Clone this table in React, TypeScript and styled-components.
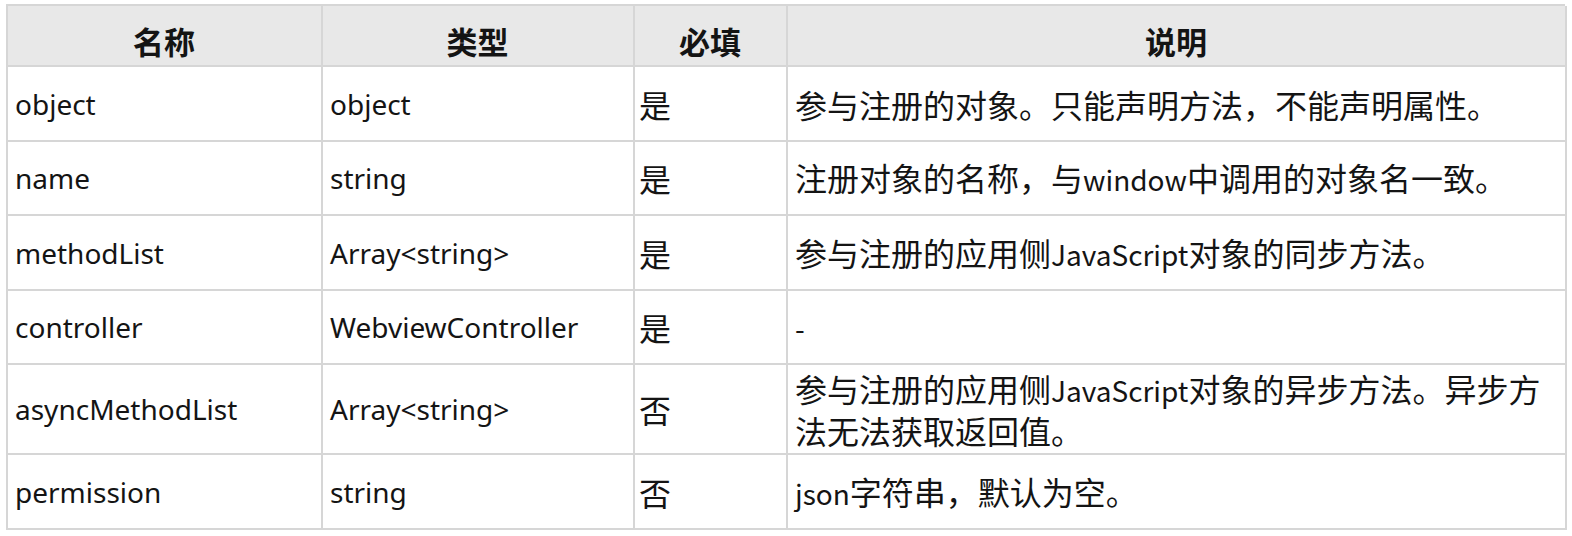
import { Fragment, type ReactNode } from 'react';
import styled, { createGlobalStyle } from 'styled-components';

const GlobalStyle = createGlobalStyle`
  body {
    margin: 0;
    background: #ffffff;
  }
`;

const Page = styled.div`
  padding: 4px 7px 0 6px;
`;

const Table = styled.div<{ $rows: number[] }>`
  display: grid;
  grid-template-columns: 315px 312px 153px 779px;
  grid-template-rows: ${({ $rows }) => $rows.map((h) => `${h}px`).join(' ')};
  border-top: 2px solid #d6d6d6;
  border-left: 2px solid #d6d6d6;
  color: #141414;
  box-sizing: border-box;
`;

const Cell = styled.div`
  display: flex;
  align-items: center;
  box-sizing: border-box;
  border-right: 2px solid #d6d6d6;
  border-bottom: 2px solid #d6d6d6;
  padding: 0 8px 0 7px;
`;

const HeadCell = styled(Cell)`
  justify-content: center;
  padding-top: 10px;
  background: #e8e8e8;
  font-family: 'Noto Sans CJK SC', sans-serif;
  font-size: 31px;
  font-weight: 700;
`;

const TextCell = styled(Cell)`
  font-family: 'Noto Sans', 'Noto Sans CJK SC', sans-serif;
  font-size: 28px;
`;

const RequiredCell = styled(Cell)`
  padding-left: 4px;
  font-family: 'Noto Sans CJK SC', sans-serif;
  font-size: 32px;
`;

const DescCell = styled(Cell)`
  padding-right: 22px;
  font-family: 'Noto Sans CJK SC', sans-serif;
  font-size: 32px;
  line-height: 40px;
`;

const Latin = styled.span`
  display: inline-block;
  font-family: 'Noto Sans CJK SC', sans-serif;
  font-size: 28px;
`;

interface ParamRow {
  name: string;
  type: string;
  required: string;
  desc: ReactNode;
  height: number;
}

const rows: ParamRow[] = [
  {
    name: 'object',
    type: 'object',
    required: '是',
    desc: '参与注册的对象。只能声明方法，不能声明属性。',
    height: 75,
  },
  {
    name: 'name',
    type: 'string',
    required: '是',
    desc: (
      <>
        注册对象的名称，与<Latin>window</Latin>中调用的对象名一致。
      </>
    ),
    height: 74,
  },
  {
    name: 'methodList',
    type: 'Array<string>',
    required: '是',
    desc: (
      <>
        参与注册的应用侧<Latin>JavaScript</Latin>对象的同步方法。
      </>
    ),
    height: 75,
  },
  {
    name: 'controller',
    type: 'WebviewController',
    required: '是',
    desc: <Latin>-</Latin>,
    height: 74,
  },
  {
    name: 'asyncMethodList',
    type: 'Array<string>',
    required: '否',
    desc: (
      <>
        参与注册的应用侧<Latin>JavaScript</Latin>对象的异步方法。异步方法无法获取返回值。
      </>
    ),
    height: 90,
  },
  {
    name: 'permission',
    type: 'string',
    required: '否',
    desc: (
      <>
        <Latin>json</Latin>字符串，默认为空。
      </>
    ),
    height: 75,
  },
];

function App() {
  return (
    <>
      <GlobalStyle />
      <Page>
        <Table $rows={[61, ...rows.map((row) => row.height)]}>
          <HeadCell>名称</HeadCell>
          <HeadCell>类型</HeadCell>
          <HeadCell>必填</HeadCell>
          <HeadCell>说明</HeadCell>

          {rows.map((row) => (
            <Fragment key={row.name}>
              <TextCell>{row.name}</TextCell>
              <TextCell>{row.type}</TextCell>
              <RequiredCell>{row.required}</RequiredCell>
              <DescCell>
                <span>{row.desc}</span>
              </DescCell>
            </Fragment>
          ))}
        </Table>
      </Page>
    </>
  );
}

export default App;
